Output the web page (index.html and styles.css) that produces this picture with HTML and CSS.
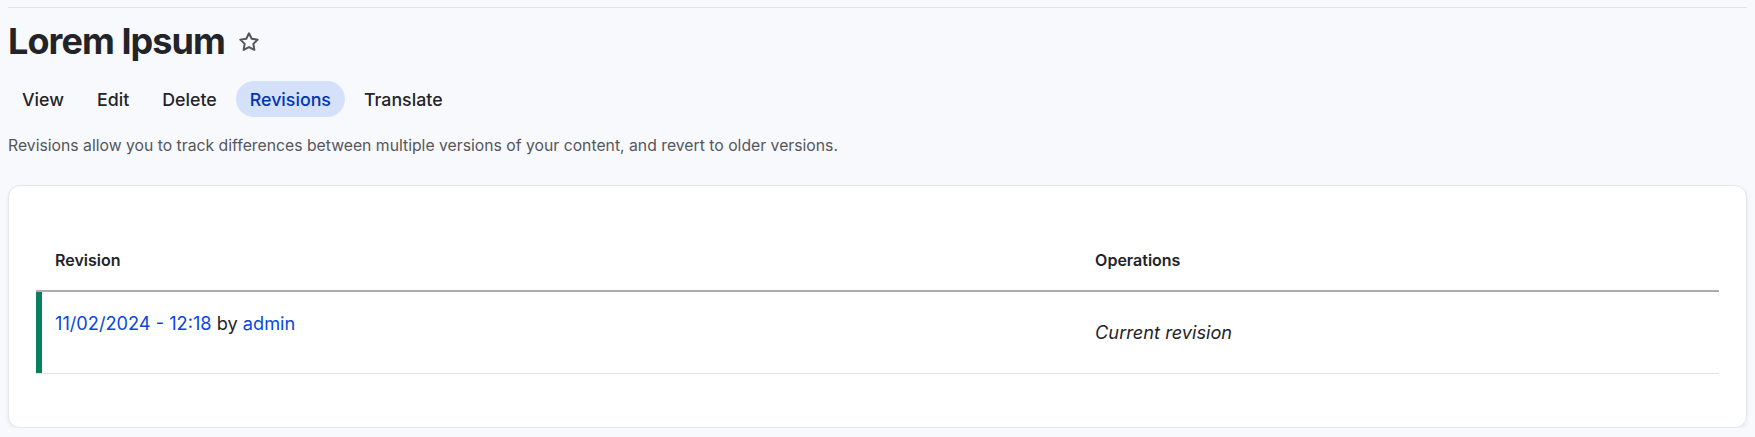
FILE: index.html
```html
<!DOCTYPE html>
<html lang="en">
<head>
<meta charset="utf-8">
<title>Lorem Ipsum – Revisions</title>
<link rel="stylesheet" href="styles.css">
</head>
<body>
<div class="page">
  <hr class="topline">
  <div class="title-row">
    <h1 class="page-title">Lorem Ipsum</h1>
    <svg class="star" width="22" height="22" viewBox="0 0 24 24" aria-hidden="true">
      <polygon points="12 2.5 14.94 8.46 21.5 9.41 16.75 14.04 17.87 20.58 12 17.49 6.13 20.58 7.25 14.04 2.5 9.41 9.06 8.46" fill="none" stroke="#55565b" stroke-width="2.2" stroke-linejoin="round"/>
    </svg>
  </div>
  <nav class="tabs">
    <a class="tab" href="#">View</a>
    <a class="tab" href="#">Edit</a>
    <a class="tab" href="#">Delete</a>
    <a class="tab is-active" href="#">Revisions</a>
    <a class="tab" href="#">Translate</a>
  </nav>
  <p class="description">Revisions allow you to track differences between multiple versions of your content, and revert to older versions.</p>
  <div class="card">
    <table class="revisions">
      <thead>
        <tr>
          <th class="col-rev">Revision</th>
          <th>Operations</th>
        </tr>
      </thead>
      <tbody>
        <tr class="current">
          <td class="rev-cell"><div class="rev-line"><a href="#">11/02/2024 - 12:18</a> by <a href="#">admin</a></div></td>
          <td class="ops-cell"><em>Current revision</em></td>
        </tr>
      </tbody>
    </table>
  </div>
</div>
</body>
</html>
```
FILE: styles.css
```css
html, body {
  margin: 0;
  padding: 0;
}
body {
  background: #f8f9fc;
  color: #232429;
  font-family: Inter, "Noto Sans", "Liberation Sans", sans-serif;
}
.page {
  padding: 7px 8px 0 8px;
}
.topline {
  margin: 0;
  border: 0;
  border-top: 1px solid #e1e2e7;
  height: 0;
}
.title-row {
  display: flex;
  align-items: center;
  gap: 13px;
  margin-top: 12px;
}
.page-title {
  margin: 0;
  font-size: 36px;
  line-height: 43px;
  font-weight: 700;
  letter-spacing: -0.026em;
  color: #232429;
}
.star {
  display: block;
  flex: none;
}
.tabs {
  display: flex;
  gap: 5px;
  margin-top: 18px;
}
.tab {
  display: flex;
  align-items: center;
  height: 36px;
  padding: 0 14px;
  border-radius: 18px;
  font-size: 17.8px;
  font-weight: 500;
  color: #232429;
  text-decoration: none;
}
.tab.is-active {
  background: #d5e1fb;
  color: #0036b1;
}
.description {
  margin: 18px 0 0 0;
  font-size: 15.75px;
  line-height: 21px;
  color: #55565b;
}
.card {
  margin-top: 29px;
  background: #fff;
  border: 1px solid #e6e7ec;
  border-radius: 12px;
  box-shadow: 0 2px 4px rgba(34, 35, 48, 0.07);
  padding: 28px 27px 27px 27px;
}
.revisions {
  width: 100%;
  border-collapse: collapse;
  margin: 16px 0 26px 0;
}
.revisions th {
  text-align: left;
  font-size: 16px;
  line-height: 24px;
  font-weight: 600;
  color: #232429;
  padding: 18px 19px;
  border-bottom: 2px solid #adadad;
}
.revisions th.col-rev {
  width: 61.8%;
}
.revisions td {
  font-size: 18.2px;
  line-height: 27px;
  padding: 18px 19px;
  border-bottom: 1px solid #e1e2e6;
  vertical-align: middle;
}
.revisions tr.current td.rev-cell {
  box-shadow: inset 6px 0 0 #057f5c;
  vertical-align: top;
}
.rev-line {
  margin-bottom: 18px;
}
.revisions a {
  color: #0a47dd;
  text-decoration: none;
}
.ops-cell em {
  font-style: italic;
}
```
